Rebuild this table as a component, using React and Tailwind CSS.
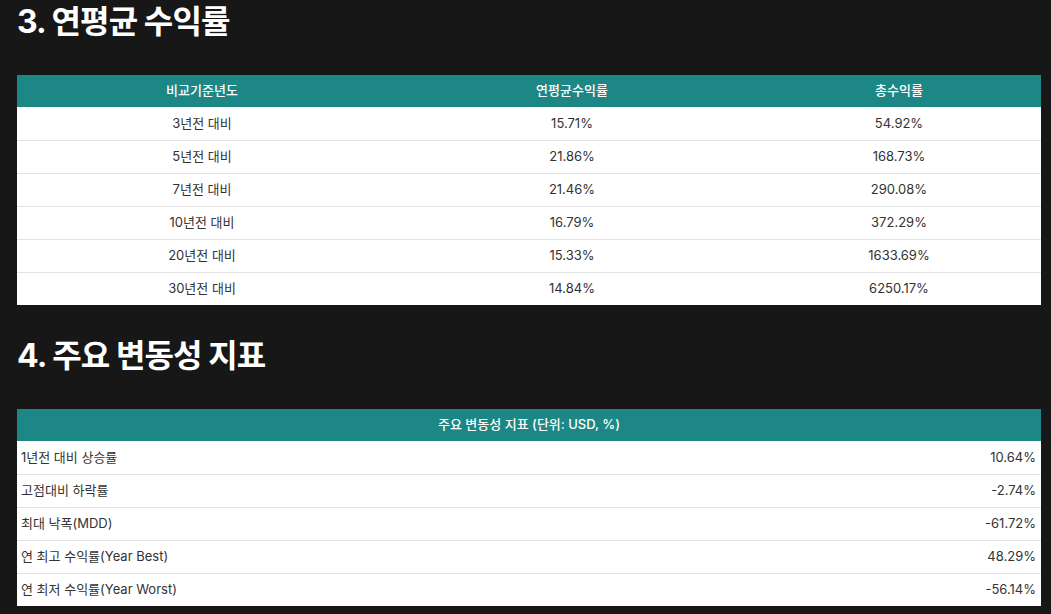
const RETURNS = [
  ["3년전 대비", "15.71%", "54.92%"],
  ["5년전 대비", "21.86%", "168.73%"],
  ["7년전 대비", "21.46%", "290.08%"],
  ["10년전 대비", "16.79%", "372.29%"],
  ["20년전 대비", "15.33%", "1633.69%"],
  ["30년전 대비", "14.84%", "6250.17%"],
];

const VOLATILITY = [
  ["1년전 대비 상승률", "10.64%"],
  ["고점대비 하락률", "-2.74%"],
  ["최대 낙폭(MDD)", "-61.72%"],
  ["연 최고 수익률(Year Best)", "48.29%"],
  ["연 최저 수익률(Year Worst)", "-56.14%"],
];

const font = { fontFamily: 'Inter, "Noto Sans CJK KR", sans-serif' };

export default function App() {
  return (
    <div className="min-h-[614px] bg-[#171717] pl-[17px] pr-[10px] overflow-hidden" style={font}>
      {/* 3. annual return */}
      <h2 className="text-[32px] font-bold text-white leading-[44px] tracking-[-0.9px] mt-0">3. 연평균 수익률</h2>
      <table className="w-[1024px] mt-[31px] border-collapse bg-white text-[13px] text-[#333]">
        <thead>
          <tr className="bg-[#1c8785] text-white h-[32px]">
            <th className="w-[370px] font-medium">비교기준년도</th>
            <th className="w-[370px] font-medium">연평균수익률</th>
            <th className="font-medium">총수익률</th>
          </tr>
        </thead>
        <tbody>
          {RETURNS.map(([a, b, c], i) => (
            <tr key={a} className={i > 0 ? "h-[33px] border-t border-[#e3e3e3]" : "h-[33px]"}>
              <td className="text-center">{a}</td>
              <td className="text-center">{b}</td>
              <td className="text-center">{c}</td>
            </tr>
          ))}
        </tbody>
      </table>

      {/* 4. volatility */}
      <h2 className="text-[32px] font-bold text-white leading-[44px] tracking-[-0.9px] mt-[29px]">4. 주요 변동성 지표</h2>
      <table className="w-[1024px] mt-[31px] border-collapse bg-white text-[13px] text-[#333]">
        <thead>
          <tr className="bg-[#1c8785] text-white h-[32px]">
            <th colSpan={2} className="font-medium">주요 변동성 지표 (단위: USD, %)</th>
          </tr>
        </thead>
        <tbody>
          {VOLATILITY.map(([k, v], i) => (
            <tr key={k} className={i > 0 ? "h-[33px] border-t border-[#e3e3e3]" : "h-[33px]"}>
              <td className="text-left pl-[4px]">{k}</td>
              <td className="text-right pr-[5px]">{v}</td>
            </tr>
          ))}
        </tbody>
      </table>
    </div>
  );
}
